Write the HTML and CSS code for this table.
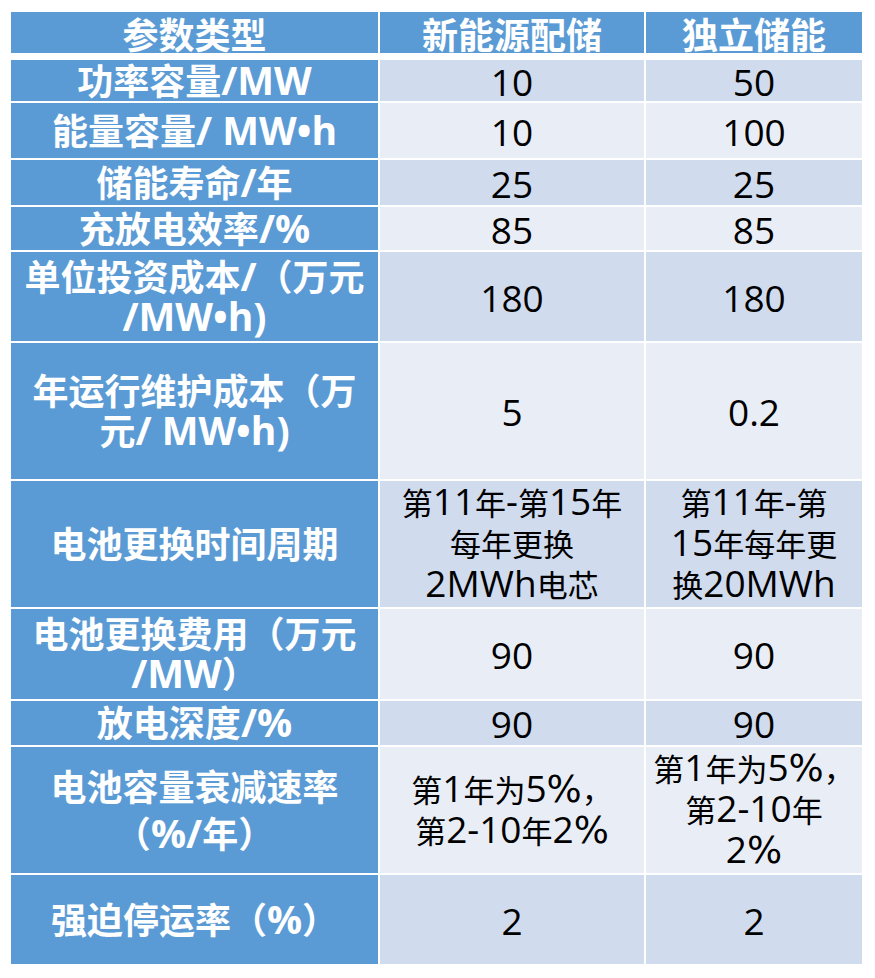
FILE: index.html
```html
<!DOCTYPE html>
<html lang="zh-CN">
<head>
<meta charset="utf-8">
<title>储能参数对比</title>
<link rel="stylesheet" href="styles.css">
</head>
<body>
<div class="table">
  <div class="cell hd">参数类型</div>
  <div class="cell hd">新能源配储</div>
  <div class="cell hd">独立储能</div>

  <div class="cell label">功率容量<span class="lat">/MW</span></div>
  <div class="cell val num dark">10</div>
  <div class="cell val num dark">50</div>

  <div class="cell label">能量容量<span class="lat">/ MW•h</span></div>
  <div class="cell val num light">10</div>
  <div class="cell val num light">100</div>

  <div class="cell label">储能寿命<span class="lat">/</span>年</div>
  <div class="cell val num dark">25</div>
  <div class="cell val num dark">25</div>

  <div class="cell label">充放电效率<span class="lat">/%</span></div>
  <div class="cell val num light">85</div>
  <div class="cell val num light">85</div>

  <div class="cell label">单位投资成本<span class="lat">/</span>（万元<br><span class="lat">/MW•h)</span></div>
  <div class="cell val num dark">180</div>
  <div class="cell val num dark">180</div>

  <div class="cell label">年运行维护成本（万<br>元<span class="lat">/ MW•h)</span></div>
  <div class="cell val num light">5</div>
  <div class="cell val num light">0.2</div>

  <div class="cell label">电池更换时间周期</div>
  <div class="cell val dark">第<span class="lat">11</span>年<span class="lat">-</span>第<span class="lat">15</span>年<br>每年更换<br><span class="lat">2MWh</span>电芯</div>
  <div class="cell val dark">第<span class="lat">11</span>年<span class="lat">-</span>第<br><span class="lat">15</span>年每年更<br>换<span class="lat">20MWh</span></div>

  <div class="cell label">电池更换费用（万元<br><span class="lat">/MW</span>）</div>
  <div class="cell val num light">90</div>
  <div class="cell val num light">90</div>

  <div class="cell label">放电深度<span class="lat">/%</span></div>
  <div class="cell val num dark">90</div>
  <div class="cell val num dark">90</div>

  <div class="cell label wide-lines">电池容量衰减速率<br>（<span class="lat">%/</span>年）</div>
  <div class="cell val light">第<span class="lat">1</span>年为<span class="lat">5</span><span class="pct">%</span>，<br>第<span class="lat">2-10</span>年<span class="lat">2</span><span class="pct">%</span></div>
  <div class="cell val light">第<span class="lat">1</span>年为<span class="lat">5</span><span class="pct">%</span>，<br>第<span class="lat">2-10</span>年<br><span class="lat">2</span><span class="pct">%</span></div>

  <div class="cell label">强迫停运率（<span class="lat">%</span>）</div>
  <div class="cell val num dark">2</div>
  <div class="cell val num dark">2</div>
</div>
</body>
</html>
```

FILE: styles.css
```css
html, body {
  margin: 0;
  padding: 0;
  background: #ffffff;
}

.table {
  display: grid;
  grid-template-columns: 367px 264px 216px;
  grid-template-rows: 46px 41px 55px 45px 43px 89px 136px 126px 90px 44px 126px 89px;
  gap: 2px;
  margin: 12px 0 0 11px;
  width: max-content;
  font-family: "Open Sans", "Noto Sans CJK SC", sans-serif;
}

.cell {
  display: flex;
  align-items: center;
  justify-content: center;
  text-align: center;
  white-space: nowrap;
}

.hd {
  background: #5b9bd5;
  color: #ffffff;
  font-weight: 700;
  font-size: 36px;
  line-height: 40px;
  margin-bottom: 5px;
  padding-top: 7px;
}

.label {
  display: block;
  align-content: center;
  background: #5b9bd5;
  color: #ffffff;
  font-weight: 700;
  font-size: 36px;
  line-height: 40px;
  padding-top: 2px;
}

.label .lat {
  font-size: 39px;
  line-height: 0;
}

.wide-lines {
  line-height: 47px;
}

.val {
  display: block;
  align-content: center;
  color: #000000;
  font-size: 31px;
  line-height: 41px;
  padding-top: 1px;
}

.val .lat {
  font-size: 37px;
  line-height: 0;
}

.val .pct {
  font-family: "DejaVu Sans", "Open Sans", sans-serif;
  font-size: 37px;
  line-height: 0;
}

.val.num {
  font-size: 37px;
}

.dark {
  background: #d0dbee;
}

.light {
  background: #e9eef6;
}
```
